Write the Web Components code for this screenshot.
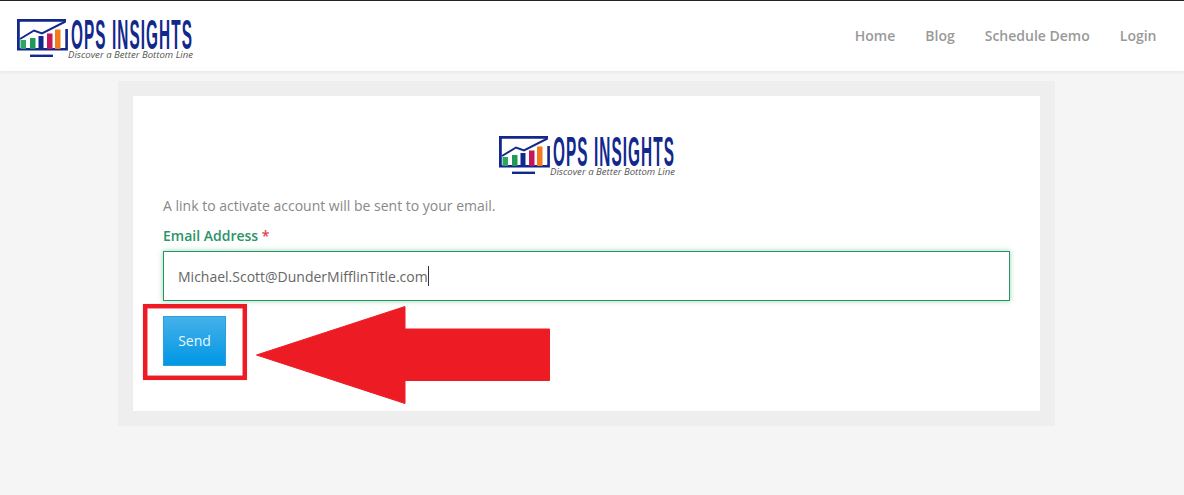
<!DOCTYPE html>
<html lang="en"><head><meta charset="utf-8"><title>Ops Insights</title>
<style>
html,body{margin:0;padding:0;height:495px;overflow:hidden}
body{background:#f5f5f5;font-family:"Open Sans",sans-serif;font-size:14px}
</style></head><body>
<site-header></site-header>
<activate-card></activate-card>
<script>
const logoTpl=document.createElement('template');
logoTpl.innerHTML=`<style>:host{display:block;width:178px;height:44px}svg{display:block;overflow:visible}</style>
<svg width="178" height="44" viewBox="0 0 178 44" role="img" aria-label="Ops Insights logo">
<path d="M1.4 32V3.4H49" fill="none" stroke="#12288c" stroke-width="2.8"/>
<path d="M0 32.2H49.6V12" fill="none" stroke="#12288c" stroke-width="2.6"/>
<rect x="13" y="37.6" width="23" height="2.4" fill="#12288c"/>
<path d="M3 22 L17 13.5 L25 16.5 L48.5 4.5" fill="none" stroke="#12288c" stroke-width="2"/>
<rect x="3.5" y="23" width="5.5" height="9" fill="#2fa760"/>
<rect x="13" y="21" width="5.5" height="11" fill="#1f9a58"/>
<rect x="21.5" y="19" width="5" height="13" fill="#12288c"/>
<rect x="30" y="16.5" width="5.5" height="15.5" fill="#c2185b"/>
<rect x="38" y="12.5" width="5.5" height="19.5" fill="#f47a20"/>
<text x="54" y="32" font-family="Liberation Sans" font-weight="700" font-size="43" letter-spacing="3" fill="#12288c" textLength="122" lengthAdjust="spacingAndGlyphs">OPS INSIGHTS</text>
<text x="51" y="40.5" font-family="Open Sans" font-style="italic" font-size="9" fill="#555" textLength="125" lengthAdjust="spacingAndGlyphs">Discover a Better Bottom Line</text>
</svg>`;
customElements.define('ops-logo',class extends HTMLElement{constructor(){super();this.attachShadow({mode:'open'}).append(logoTpl.content.cloneNode(true))}});

const navTpl=document.createElement('template');
navTpl.innerHTML=`<style>:host{display:block;color:#999;font-weight:600;font-size:14px;line-height:20px}a{color:inherit;text-decoration:none}</style><a href="#"><slot></slot></a>`;
customElements.define('nav-link',class extends HTMLElement{constructor(){super();this.attachShadow({mode:'open'}).append(navTpl.content.cloneNode(true))}});

const hdrTpl=document.createElement('template');
hdrTpl.innerHTML=`<style>
:host{display:flex;box-sizing:border-box;height:71px;background:#fff;border-top:1px solid #222;align-items:center;justify-content:space-between;padding:0 27.5px 0 17px;box-shadow:0 1px 4px rgba(0,0,0,.07);position:relative}
nav{display:flex;gap:30px}
ops-logo{margin-top:6px}
</style><ops-logo></ops-logo><nav><nav-link>Home</nav-link><nav-link>Blog</nav-link><nav-link>Schedule Demo</nav-link><nav-link>Login</nav-link></nav>`;
customElements.define('site-header',class extends HTMLElement{constructor(){super();this.attachShadow({mode:'open'}).append(hdrTpl.content.cloneNode(true))}});

const fieldTpl=document.createElement('template');
fieldTpl.innerHTML=`<style>
:host{display:block}
label{display:block;color:#2a9468;font-weight:600;font-size:14px;line-height:20px;margin-bottom:5px}
label b{color:#e0444c;font-weight:600}
.box{box-sizing:border-box;height:50px;border:1px solid #2a9468;box-shadow:0 0 5px rgba(60,180,110,.55);background:#fff;padding:0 14px;display:flex;align-items:center;color:#666;font-size:14px}
.caret{display:inline-block;width:1px;height:20px;background:#333}
</style><label>Email Address <b>*</b></label><div class="box"><span><slot></slot></span><span class="caret"></span></div>`;
customElements.define('email-field',class extends HTMLElement{constructor(){super();this.attachShadow({mode:'open'}).append(fieldTpl.content.cloneNode(true))}});

const btnTpl=document.createElement('template');
btnTpl.innerHTML=`<style>
:host{display:inline-flex;box-sizing:border-box;width:63px;height:50px;padding-bottom:2px;align-items:center;justify-content:center;color:#eaf7ff;font-size:14px;background:linear-gradient(#45b1ea,#0097e4);border:1px solid #2a9fdc}
</style><slot></slot>`;
customElements.define('send-button',class extends HTMLElement{constructor(){super();this.attachShadow({mode:'open'}).append(btnTpl.content.cloneNode(true))}});

const cardTpl=document.createElement('template');
cardTpl.innerHTML=`<style>
:host{display:block;box-sizing:border-box;width:937px;margin:10px 0 0 118px;padding:15px;background:#eee}
.inner{position:relative;box-sizing:border-box;height:315px;background:#fff;padding:38px 30px 0;display:flex;flex-direction:column}
ops-logo{align-self:center;margin-left:2px}
p{margin:18px 0 0;color:#888;font-size:14px;line-height:20px}
email-field{margin-top:10px}
.act{margin-top:15px;display:flex}
svg{position:absolute;left:0;top:0;pointer-events:none}
</style><div class="inner">
<ops-logo></ops-logo>
<p>A link to activate account will be sent to your email.</p>
<email-field>Michael.Scott@DunderMifflinTitle.com</email-field>
<div class="act"><send-button>Send</send-button></div>
<svg width="907" height="315" viewBox="133 96 907 315" aria-hidden="true">
<rect x="145.2" y="306.2" width="99.6" height="71.6" fill="none" stroke="#ed1c24" stroke-width="4.5"/>
<path d="M256.5 355 L405 306.5 V329 H549.5 V380.5 H405 V403.5 Z" fill="#ed1c24" stroke="#ed1c24" stroke-width="1" stroke-linejoin="round"/>
</svg>
</div>`;
customElements.define('activate-card',class extends HTMLElement{constructor(){super();this.attachShadow({mode:'open'}).append(cardTpl.content.cloneNode(true))}});
</script>
</body></html>
